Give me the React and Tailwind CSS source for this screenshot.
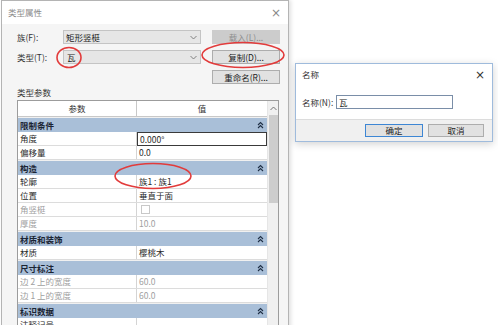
import React from 'react';

const F = { fontFamily: '"Noto Sans CJK SC", "Liberation Sans", sans-serif' };

function Chevron() {
  return (
    <svg width="7" height="5" viewBox="0 0 7 5">
      <path d="M0.5 1 L3.5 4 L6.5 1" fill="none" stroke="#777" strokeWidth="0.9" />
    </svg>
  );
}

function DoubleUp() {
  return (
    <svg width="7" height="8" viewBox="0 0 7 8">
      <path d="M1 4 L3.5 1.5 L6 4 M1 7 L3.5 4.5 L6 7" fill="none" stroke="#1f2f45" strokeWidth="1.1" />
    </svg>
  );
}

const groups = [
  { title: '限制条件', rows: [{ k: '角度', v: '0.000°', focus: true }, { k: '偏移量', v: '0.0' }] },
  {
    title: '构造',
    rows: [
      { k: '轮廓', v: '族1 : 族1' },
      { k: '位置', v: '垂直于面' },
      { k: '角竖梃', check: true, dis: true },
      { k: '厚度', v: '10.0', dis: true },
    ],
  },
  { title: '材质和装饰', rows: [{ k: '材质', v: '樱桃木' }] },
  {
    title: '尺寸标注',
    rows: [
      { k: '边 2 上的宽度', v: '60.0', dis: true },
      { k: '边 1 上的宽度', v: '60.0', dis: true },
    ],
  },
  { title: '标识数据', rows: [{ k: '注释记号', v: '' }] },
];

function Row({ r }) {
  const c = r.dis ? 'text-[#a0a0a0]' : 'text-[#2a2a2a]';
  return (
    <div className="flex h-[14px] bg-white border-b border-[#dcdcdc]">
      <div className={`w-[119px] shrink-0 border-r border-[#d4d4d4] pl-[2px] flex items-center leading-none ${c}`}>{r.k}</div>
      <div
        className={`flex-1 flex items-center leading-none pl-[2px] ${c} ${
          r.focus ? 'border border-[#3a3a3a] -mb-[1px]' : ''
        }`}
      >
        {r.check ? <div className="w-[9px] h-[9px] border border-[#c8c8c8] bg-white ml-[2px]" /> : r.v}
      </div>
    </div>
  );
}

export default function App() {
  return (
    <div className="relative w-[498px] h-[325px] overflow-hidden bg-white text-[8.5px]" style={F}>
      {/* Main dialog */}
      <div className="absolute left-[1px] top-0 w-[288px] h-[340px] border border-[#b4b4b4] bg-[#f5f5f5] shadow-[2px_0_4px_rgba(0,0,0,0.12)] flex flex-col">
        <div className="h-[23px] bg-white flex items-center justify-between pl-[6px] pr-[7px] shrink-0">
          <span className="text-[#8a8a8a] text-[8.5px]">类型属性</span>
          <span className="text-[#888] text-[12px] leading-none" style={{ fontFamily: '"DejaVu Sans", sans-serif' }}>×</span>
        </div>
        <div className="flex flex-col pl-[15px]">
          <div className="flex items-center h-[14px] mt-[6px]">
            <div className="w-[46px] text-[#333]">族(F):</div>
            <div className="w-[138px] h-[14px] bg-[#e6e6e6] border border-[#c4c4c4] flex items-center justify-between pl-[2px] pr-[3px] text-[#222]">
              <span>矩形竖梃</span>
              <Chevron />
            </div>
            <div className="ml-[11px] w-[68px] h-[14px] bg-[#cccccc] flex items-center justify-center text-[#8c8c8c]">载入(L)...</div>
          </div>
          <div className="flex items-center h-[14px] mt-[6px]">
            <div className="w-[46px] text-[#333]">类型(T):</div>
            <div className="w-[138px] h-[14px] bg-[#e6e6e6] border border-[#c4c4c4] flex items-center justify-between pl-[3px] pr-[3px] text-[#222]">
              <span>瓦</span>
              <Chevron />
            </div>
            <div className="ml-[11px] w-[68px] h-[14px] bg-[#e1e1e1] border border-[#adadad] flex items-center justify-center text-[#222]">复制(D)...</div>
          </div>
          <div className="flex items-center h-[14px] mt-[6px]">
            <div className="ml-[195px] w-[68px] h-[14px] bg-[#e1e1e1] border border-[#adadad] flex items-center justify-center text-[#222]">重命名(R)...</div>
          </div>
          <div className="h-[13px] mt-[2px] flex items-center text-[#333]">类型参数</div>
          <div className="mt-[1px] w-[262px] h-[240px] border border-[#9c9c9c] flex bg-[#f0f0f0] overflow-hidden">
            <div className="w-[249px] flex flex-col">
              <div className="flex h-[16px] bg-white border-b border-[#c8c8c8] text-[#333]">
                <div className="w-[119px] border-r border-[#c8c8c8] flex items-center justify-center">参数</div>
                <div className="flex-1 flex items-center justify-center">值</div>
              </div>
              {groups.map((g) => (
                <div key={g.title} className="flex flex-col mt-[1px]">
                  <div className="h-[14px] bg-[#a9bfd8] flex items-center justify-between pl-[2px] pr-[3px] text-[#1a2433] font-bold">
                    <span>{g.title}</span>
                    <DoubleUp />
                  </div>
                  {g.rows.map((r) => (
                    <Row key={r.k} r={r} />
                  ))}
                </div>
              ))}
            </div>
            <div className="flex-1 flex flex-col items-center bg-[#f0f0f0] border-l border-[#e6e6e6]">
              <div className="h-[14px] flex items-center">
                <svg width="7" height="5" viewBox="0 0 7 5">
                  <path d="M0.5 4 L3.5 1 L6.5 4" fill="none" stroke="#666" strokeWidth="0.9" />
                </svg>
              </div>
              <div className="w-[9px] h-[88px] bg-[#cdcdcd]" />
              <div className="flex-1" />
              <div className="h-[10px] flex items-start">
                <Chevron />
              </div>
            </div>
          </div>
        </div>
      </div>

      {/* Name dialog */}
      <div className="absolute left-[295px] top-[63px] w-[198px] h-[79px] border border-[#9fbbdc] bg-white shadow-[0_2px_8px_rgba(0,0,0,0.18)] flex flex-col">
        <div className="h-[21px] flex items-center justify-between pl-[6px] pr-[7px] shrink-0">
          <span className="text-[#333]">名称</span>
          <span className="text-[#333] text-[12px] leading-none" style={{ fontFamily: '"DejaVu Sans", sans-serif' }}>×</span>
        </div>
        <div className="h-[35px] flex items-center pl-[6px] border-b border-[#dcdcdc]">
          <span className="text-[#333] w-[34px]">名称(N):</span>
          <div className="w-[117px] h-[14px] border border-[#7a8ea8] flex items-center pl-[2px] text-[#222]">瓦</div>
        </div>
        <div className="flex-1 bg-[#f0f0f0] flex items-center justify-end pr-[8px] gap-[5px]">
          <div className="w-[58px] h-[13px] bg-[#e1e1e1] border border-[#3d86d4] flex items-center justify-center text-[#222]">确定</div>
          <div className="w-[56px] h-[13px] bg-[#e1e1e1] border border-[#adadad] flex items-center justify-center text-[#222]">取消</div>
        </div>
      </div>

      {/* Red annotations */}
      <svg className="absolute left-0 top-0 pointer-events-none" width="498" height="325">
        <ellipse cx="69" cy="57.5" rx="12" ry="10" fill="none" stroke="#e23b3b" strokeWidth="1.6" />
        <ellipse cx="243" cy="55" rx="41" ry="12.5" fill="none" stroke="#e23b3b" strokeWidth="1.6" />
        <ellipse cx="153" cy="176" rx="38" ry="12.5" fill="none" stroke="#e23b3b" strokeWidth="1.6" />
      </svg>
    </div>
  );
}
